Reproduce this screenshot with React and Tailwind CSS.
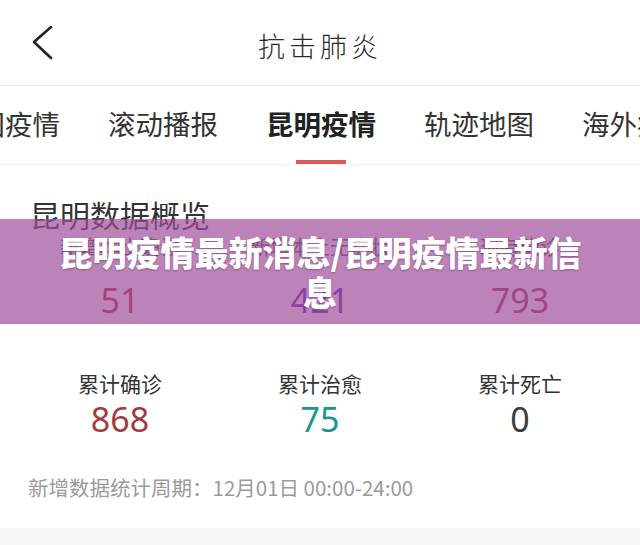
import React from "react";

const tabs = ["全国疫情", "滚动播报", "昆明疫情", "轨迹地图", "海外疫情"];

const topStats = [
  { label: "新增本土确诊", value: "51", color: "text-[#b8242f]" },
  { label: "新增本土无症状", value: "421", color: "text-[#5a22b8]" },
  { label: "现有确诊", value: "793", color: "text-[#a8304e]" },
];

const totalStats = [
  { label: "累计确诊", value: "868", color: "text-[#a63a3a]" },
  { label: "累计治愈", value: "75", color: "text-[#21938f]" },
  { label: "累计死亡", value: "0", color: "text-[#3d3d3d]" },
];

function StatGrid({ items, labelClass, valueClass }) {
  return (
    <div className="grid grid-cols-3 px-[20px]">
      {items.map((s) => (
        <div key={s.label} className="flex flex-col items-center">
          <div className={labelClass}>{s.label}</div>
          <div className={`${valueClass} ${s.color}`}>{s.value}</div>
        </div>
      ))}
    </div>
  );
}

export default function App() {
  return (
    <div className="relative w-[640px] h-[545px] overflow-hidden bg-white font-['Noto_Sans_CJK_SC',sans-serif] text-[#333]">
      {/* top bar */}
      <header className="h-[86px] grid grid-cols-[1fr_auto_1fr] items-center border-b border-[#ececec]">
        <div className="pl-[32px] flex items-center">
          <svg width="22" height="34" viewBox="0 0 22 34" fill="none">
            <polyline
              points="19,1 2,16 19,32"
              stroke="#222"
              strokeWidth="2.6"
              strokeLinecap="round"
              strokeLinejoin="round"
            />
          </svg>
        </div>
        <div className="text-[27px] font-light tracking-[4px] text-[#2a2a2a] leading-none pt-[6px]">
          抗击肺炎
        </div>
        <div />
      </header>

      {/* channel tabs */}
      <nav className="h-[79px] flex gap-[48px] ml-[-50px] border-b border-[#f2f2f2]">
        {tabs.map((t) => {
          const active = t === "昆明疫情";
          return (
            <div key={t} className="w-[110px] shrink-0 flex flex-col items-center pt-[24px]">
              <div
                className={`text-[27.5px] leading-none whitespace-nowrap ${
                  active ? "font-bold text-[#222]" : "text-[#333]"
                }`}
              >
                {t}
              </div>
              {active && <div className="mt-[22px] w-[50px] h-[5px] bg-[#d65b5b]" />}
            </div>
          );
        })}
      </nav>

      {/* data overview */}
      <section className="pt-[34px]">
        <h2 className="pl-[30px] text-[30px] leading-none text-[#333]">昆明数据概览</h2>
        <div className="mt-[6px]">
          <StatGrid
            items={topStats}
            labelClass="text-[20px] leading-none text-[#555] mt-[2px]"
            valueClass="mt-[26px] text-[34px] leading-none font-['Noto_Sans',sans-serif]"
          />
        </div>
        <div className="mt-[56px]">
          <StatGrid
            items={totalStats}
            labelClass="text-[21px] leading-none text-[#333]"
            valueClass="mt-[8px] text-[34px] leading-none font-['Noto_Sans',sans-serif]"
          />
        </div>
        <p className="mt-[41px] pl-[28px] text-[20.5px] leading-none text-[#9a9a9a]">
          新增数据统计周期：12月01日 00:00-24:00
        </p>
      </section>

      <div className="absolute left-0 right-0 bottom-0 h-[17px] bg-[#f5f5f5]" />

      {/* headline banner over the page */}
      <div className="absolute left-0 right-0 top-[219px] h-[105px] bg-[rgba(160,78,155,0.7)] flex items-center justify-center px-[45px]">
        <div className="text-center text-white font-black text-[34px] leading-[40px] [text-shadow:0_1px_2px_rgba(60,0,60,0.35)]">
          昆明疫情最新消息/昆明疫情最新信息
        </div>
      </div>
    </div>
  );
}
